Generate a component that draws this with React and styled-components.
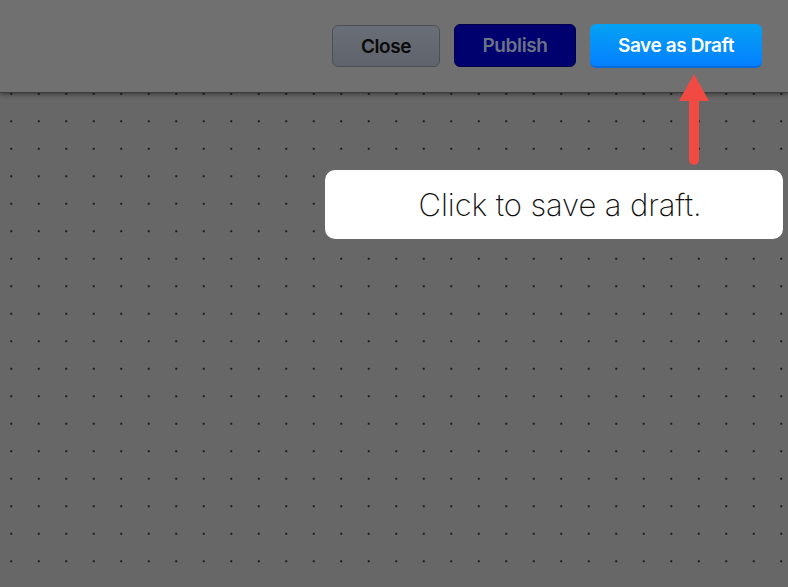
import styled, { createGlobalStyle } from 'styled-components'

const GlobalStyle = createGlobalStyle`
	html, body {
		margin: 0;
		padding: 0;
		background: #676767;
		font-family: 'Liberation Sans', Arial, sans-serif;
	}`;

const Page = styled.div`
	width: 788px;
	height: 587px;
	display: flex;
	flex-direction: column;
	overflow: hidden;
	background: #676767;`;

const Toolbar = styled.header`
	position: relative;
	z-index: 2;
	height: 93px;
	flex-shrink: 0;
	display: flex;
	justify-content: flex-end;
	align-items: flex-start;
	gap: 14px;
	padding: 25px 26px 0 0;
	box-sizing: border-box;
	background: #707070;
	border-bottom: 1px solid #3c3c3c;
	box-shadow: 0 2px 4px rgba(0, 0, 0, 0.35);`;

const variants = {
	close: `
		width: 108px;
		height: 42px;
		margin-top: 0;
		color: #0b0b0b;
		background: linear-gradient(#6a6e76, #5f636c);
		border: 1px solid #4b4f58;`,
	publish: `
		width: 122px;
		height: 43px;
		margin-top: -1px;
		color: #6b7385;
		background: #00006e;
		border: 1px solid #00004a;`,
	draft: `
		width: 172px;
		height: 44px;
		margin-top: -1px;
		color: #ffffff;
		background: linear-gradient(#05a2f4, #0480ff);
		border: none;
		border-bottom: 2px solid #0a6cdc;`,
};

const Button = styled.button`
	box-sizing: border-box;
	border-radius: 6px;
	font-family: Inter, 'Liberation Sans', sans-serif;
	font-weight: 600;
	font-size: 19px;
	letter-spacing: -0.4px;
	cursor: pointer;
	padding: 0;
	${p => variants[p.$kind]}`;

const Canvas = styled.main`
	position: relative;
	flex: 1;
	margin-top: -1px;
	background-color: #676767;
	background-image: radial-gradient(circle, #1c1c1c 0.9px, transparent 1.3px);
	background-size: 27.5px 27.5px;
	background-position: -2.5px -12px;`;

const Arrow = styled.svg`
	position: absolute;
	left: 679px;
	top: -18px;
	z-index: 3;`;

const Hint = styled.div`
	position: absolute;
	left: 325px;
	top: 78px;
	width: 458px;
	height: 69px;
	display: flex;
	align-items: center;
	justify-content: center;
	padding-left: 12px;
	box-sizing: border-box;
	background: #ffffff;
	border-radius: 10px;
	font-family: Inter, 'Open Sans', sans-serif;
	font-weight: 200;
	font-size: 31px;
	letter-spacing: -0.1px;
	color: #111111;`;

const App = () => (
	<Page>
		<GlobalStyle />
		<Toolbar>
			<Button $kind="close">Close</Button>
			<Button $kind="publish">Publish</Button>
			<Button $kind="draft">Save as Draft</Button>
		</Toolbar>
		<Canvas>
			<Arrow width="30" height="92" viewBox="0 0 30 92">
				<polygon points="15,0 30,27 0,27" fill="#f04a43" />
				<line x1="15" y1="24" x2="15" y2="86" stroke="#f04a43" strokeWidth="10" strokeLinecap="round" />
			</Arrow>
			<Hint>Click to save a draft.</Hint>
		</Canvas>
	</Page>
);

export default App;
